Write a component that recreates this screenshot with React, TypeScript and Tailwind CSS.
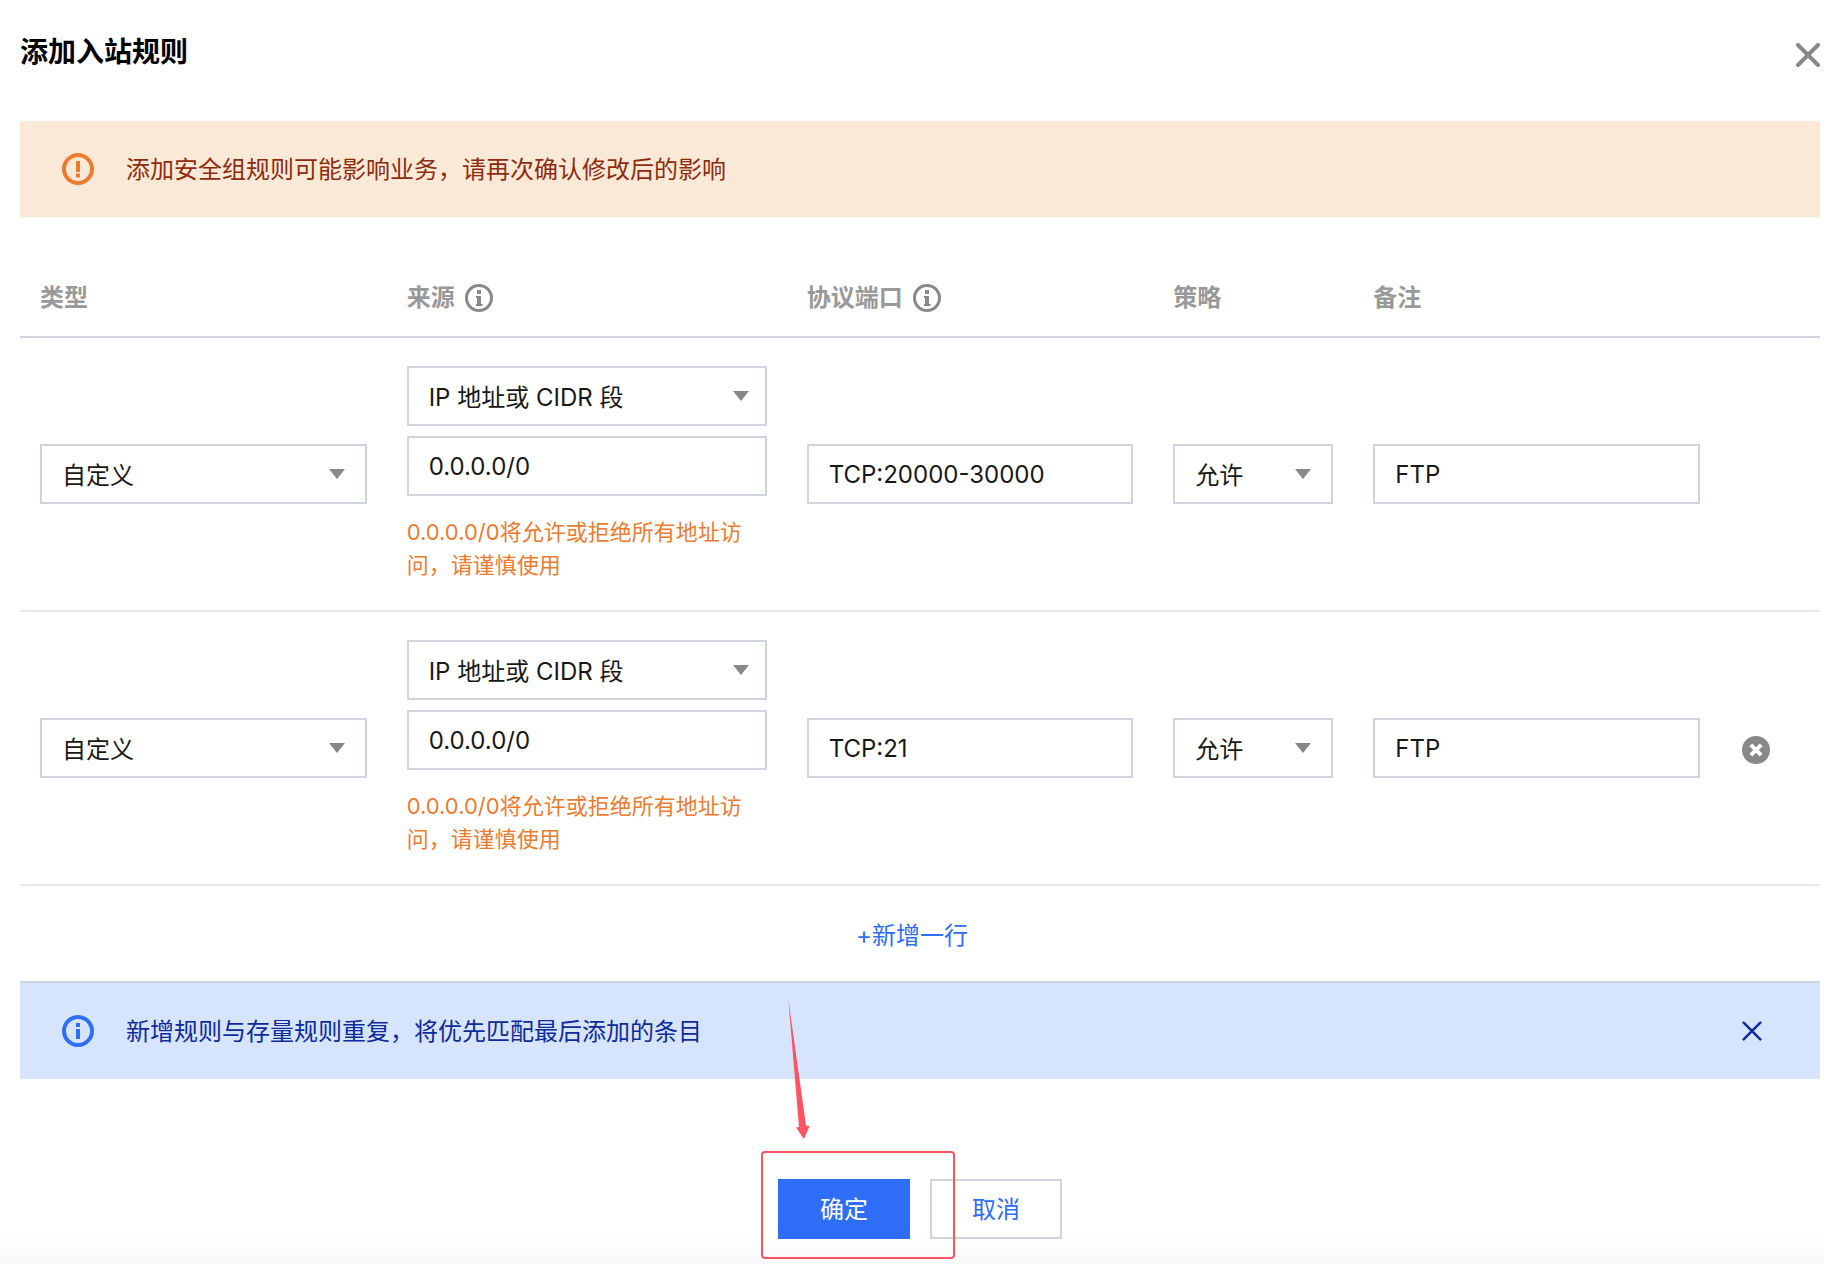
import React, { useState } from "react";

// ── Palette ───────────────────────────────────────────────────
// #2e6df6 primary | #cfd5de control border | #888888 icons
// #fbe9d7 / #8e2c0d warning | #d6e5fd / #0f2a9c info | #ed7b2f hint

interface Rule {
  id: number;
  type: string;
  sourceType: string;
  source: string;
  port: string;
  policy: string;
  remark: string;
}

const initialRules: Rule[] = [
  { id: 1, type: "自定义", sourceType: "IP 地址或 CIDR 段", source: "0.0.0.0/0", port: "TCP:20000-30000", policy: "允许", remark: "FTP" },
  { id: 2, type: "自定义", sourceType: "IP 地址或 CIDR 段", source: "0.0.0.0/0", port: "TCP:21",          policy: "允许", remark: "FTP" },
];

// ── Icons ─────────────────────────────────────────────────────
const IconWarning = () => (
  <svg viewBox="0 0 32 32" className="h-8 w-8 shrink-0" fill="none" aria-hidden="true">
    <circle cx="16" cy="16" r="14" stroke="#ed7b2f" strokeWidth="4" />
    <path d="M14 8h4v11h-4zM14 20.500h4v4h-4z" fill="#ed7b2f" />
  </svg>
);

const IconNotice = () => (
  <svg viewBox="0 0 32 32" className="h-8 w-8 shrink-0" fill="none" aria-hidden="true">
    <circle cx="16" cy="16" r="14" stroke="#2e6df6" strokeWidth="4" />
    <path d="M14 8h4v4h-4zM14 14h4v10h-4z" fill="#2e6df6" />
  </svg>
);

const IconInfo = () => (
  <svg viewBox="0 0 28 28" className="h-7 w-7 shrink-0" fill="none" aria-hidden="true">
    <circle cx="14" cy="14" r="12.5" stroke="#888888" strokeWidth="3" />
    <path d="M12 6h4v4h-4zM11 12h5v8h1.500v2h-6.500v-2h1v-6h-1z" fill="#888888" />
  </svg>
);

const IconRemove = () => (
  <svg viewBox="0 0 28 28" className="h-7 w-7" fill="none" aria-hidden="true">
    <circle cx="14" cy="14" r="14" fill="#888888" />
    <path d="M8.800 8.800l10.400 10.400M19.200 8.800L8.800 19.200" stroke="#fff" strokeWidth="4" />
  </svg>
);

const IconCross = ({ className }: { className: string }) => (
  <svg viewBox="0 0 24 24" className={className} fill="none" stroke="currentColor" strokeLinecap="round" aria-hidden="true">
    <path d="M2 2l20 20M22 2L2 22" />
  </svg>
);

// ── Form controls ─────────────────────────────────────────────
const controlClass =
  "block h-15 w-full rounded-none border-2 border-[#cfd5de] bg-white px-5 text-2xl text-[#181818] outline-none";

const SelectBox: React.FC<{ label: string; value: string; arrowClass?: string }> = ({
  label,
  value,
  arrowClass = "right-[22px]",
}) => (
  <div className="relative">
    <select aria-label={label} defaultValue={value} className={`${controlClass} appearance-none pt-1`}>
      <option>{value}</option>
    </select>
    <svg
      viewBox="0 0 16 10"
      className={`pointer-events-none absolute top-1/2 h-2.5 w-4 -translate-y-1/2 ${arrowClass}`}
      fill="#888888"
      aria-hidden="true"
    >
      <path d="M0 0h16L8 10z" />
    </svg>
  </div>
);

const TextBox: React.FC<{ label: string; value: string }> = ({ label, value }) => (
  <input type="text" aria-label={label} defaultValue={value} className={controlClass} />
);

// ── One editable rule ─────────────────────────────────────────
const RuleRow: React.FC<{ rule: Rule; onRemove?: () => void }> = ({ rule, onRemove }) => (
  <tr className="border-b-2 border-[#e8e9ee]">
    <td className="px-5"><SelectBox label="类型" value={rule.type} /></td>
    <td className="px-5 py-7">
      <div className="flex flex-col gap-2.5">
        <SelectBox label="来源类型" value={rule.sourceType} arrowClass="right-[18px]" />
        <TextBox label="来源" value={rule.source} />
      </div>
      <p className="mt-5 text-[22px] leading-[33px] text-[#ed7b2f]">
        0.0.0.0/0将允许或拒绝所有地址访问，请谨慎使用
      </p>
    </td>
    <td className="px-5"><TextBox label="协议端口" value={rule.port} /></td>
    <td className="px-5"><SelectBox label="策略" value={rule.policy} /></td>
    <td className="px-5"><TextBox label="备注" value={rule.remark} /></td>
    <td className="pt-1 pl-[22px]">
      {onRemove && (
        <button type="button" aria-label="删除" onClick={onRemove} className="block">
          <IconRemove />
        </button>
      )}
    </td>
  </tr>
);

// ── Dialog ────────────────────────────────────────────────────
const App: React.FC = () => {
  const [rules, setRules] = useState<Rule[]>(initialRules);
  const [noticeOpen, setNoticeOpen] = useState(true);

  const addRule = () =>
    setRules([...rules, { ...initialRules[1], id: Date.now(), port: "", remark: "" }]);
  const removeRule = (id: number) => setRules(rules.filter((r) => r.id !== id));

  return (
    <main className="min-h-screen bg-linear-to-b from-white from-97% to-[#fafafa] pr-1 pb-6 pl-5 font-['Inter','Noto_Sans_CJK_SC',sans-serif] text-2xl text-[#181818]">
      <header className="flex items-start justify-between pt-8 pb-[43px]">
        <h1 className="text-[28px] leading-10 font-bold text-black">添加入站规则</h1>
        <button type="button" aria-label="关闭" className="flex h-[46px] items-center text-[#888888]">
          <IconCross className="h-6 w-6 stroke-4" />
        </button>
      </header>

      <div role="alert" className="flex h-24 items-center gap-8 bg-[#fbe9d7] px-[42px] text-[#8e2c0d]">
        <IconWarning />
        <p className="pt-0.5">添加安全组规则可能影响业务，请再次确认修改后的影响</p>
      </div>

      <table className="mt-[42px] w-full table-fixed border-collapse">
        <colgroup>
          <col />
          <col className="w-[400px]" />
          <col />
          <col className="w-[200px]" />
          <col />
          <col className="w-[100px]" />
        </colgroup>
        <thead>
          <tr className="h-[78px] border-b-2 border-[#cfd5de] text-left text-[#999999]">
            <th className="px-5 font-bold">类型</th>
            <th className="px-5 font-bold">
              <span className="flex items-center gap-2.5">来源<IconInfo /></span>
            </th>
            <th className="px-5 font-bold">
              <span className="flex items-center gap-2.5">协议端口<IconInfo /></span>
            </th>
            <th className="px-5 font-bold">策略</th>
            <th className="px-5 font-bold">备注</th>
            <td />
          </tr>
        </thead>
        <tbody>
          {rules.map((rule, i) => (
            <RuleRow key={rule.id} rule={rule} onRemove={i > 0 ? () => removeRule(rule.id) : undefined} />
          ))}
        </tbody>
      </table>

      <div className="flex h-[97px] items-center justify-center border-b-2 border-[#cfd5de] pt-1 pr-4">
        <button type="button" onClick={addRule} className="text-[#2e6df6]">+新增一行</button>
      </div>

      {noticeOpen && (
        <div role="status" className="flex h-24 items-center gap-8 bg-[#d6e5fd] pr-[58px] pl-[42px] text-[#0f2a9c]">
          <IconNotice />
          <p className="flex-1 pt-0.5">新增规则与存量规则重复，将优先匹配最后添加的条目</p>
          <button type="button" aria-label="关闭提示" onClick={() => setNoticeOpen(false)}>
            <IconCross className="h-5 w-5 stroke-3" />
          </button>
        </div>
      )}

      <footer className="flex justify-center gap-5 pt-25">
        <div className="relative">
          <button type="button" className="h-15 w-33 bg-[#2e6df6] pt-0.5 text-white">确定</button>
          {/* callout around the confirm button */}
          <div className="pointer-events-none absolute -top-7 -right-[45px] -bottom-5 -left-[17px] z-10 rounded border-2 border-[#ff5263]" />
          <svg
            viewBox="0 0 22 140"
            className="pointer-events-none absolute bottom-25 left-2.5 h-[140px] w-[22px]"
            fill="#ff5263"
            aria-hidden="true"
          >
            <path d="M0.3 0L18 126.500L21.500 127L16 140L8 128.500L11 128z" />
          </svg>
        </div>
        <button type="button" className="h-15 w-33 border-2 border-[#cfd5de] pt-0.5 text-[#2e6df6]">取消</button>
      </footer>
    </main>
  );
};

export default App;
